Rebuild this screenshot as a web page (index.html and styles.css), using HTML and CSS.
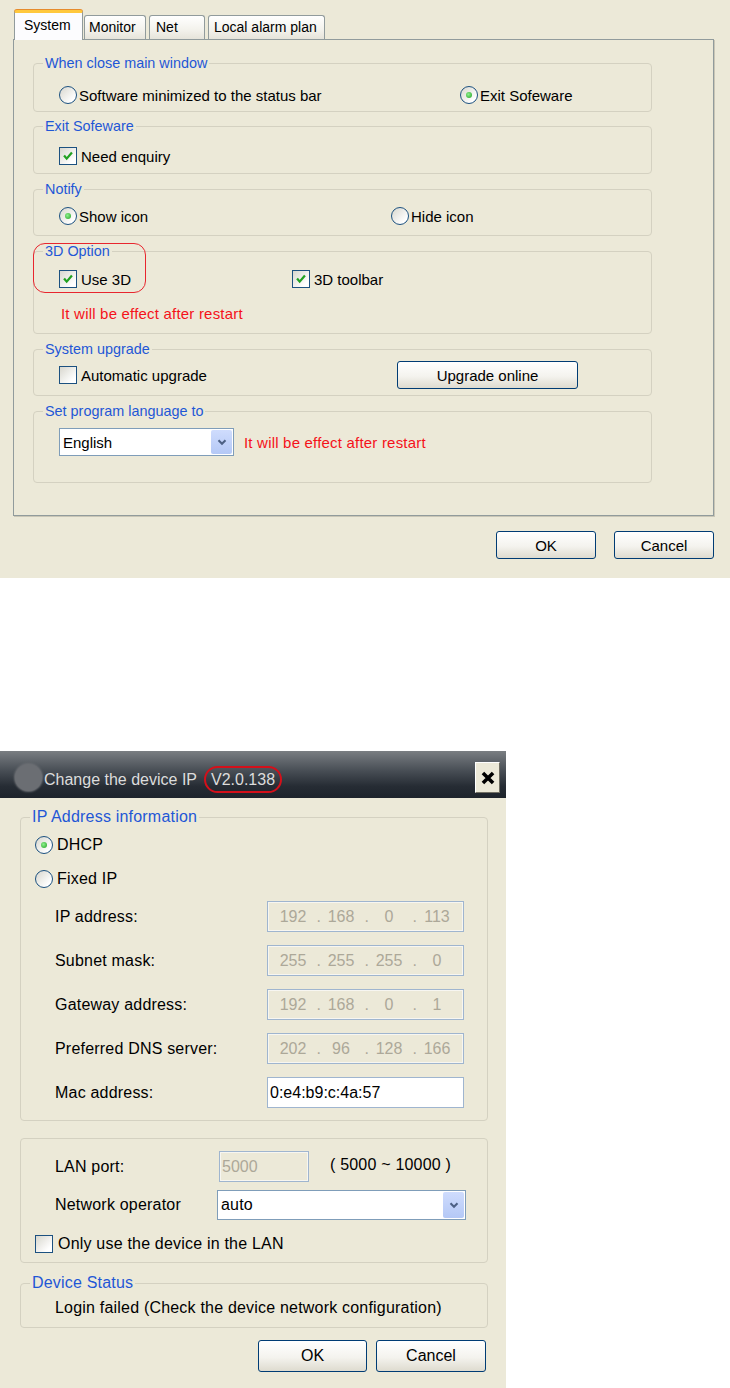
FILE: index.html
```html
<!DOCTYPE html>
<html>

<head>
    <meta charset="UTF-8">
    <title>Settings</title>
    <!-- Styles  -->
    <link rel="stylesheet" href="styles.css">
</head>

<body>
    <!-- System settings dialog -->
    <div class="settings">
        <div class="tabs">
            <div class="tab tab-active">System</div>
            <div class="tab tab-monitor">Monitor</div>
            <div class="tab tab-net">Net</div>
            <div class="tab tab-alarm">Local alarm plan</div>
        </div>

        <div class="panel">
            <fieldset class="group g-close">
                <legend>When close main window</legend>
                <div class="row">
                    <span class="opt col-close"><span class="radio"></span>Software minimized to the status bar</span>
                    <span class="opt"><span class="radio on"></span>Exit Sofeware</span>
                </div>
            </fieldset>

            <fieldset class="group g-exit">
                <legend>Exit Sofeware</legend>
                <div class="row">
                    <span class="opt"><span class="check on"><svg viewBox="0 0 16 16"><path d="M3.5 7.5 L6.5 11 L12.5 4" /></svg></span>Need enquiry</span>
                </div>
            </fieldset>

            <fieldset class="group g-notify">
                <legend>Notify</legend>
                <div class="row">
                    <span class="opt col-notify"><span class="radio on"></span>Show icon</span>
                    <span class="opt"><span class="radio"></span>Hide icon</span>
                </div>
            </fieldset>

            <fieldset class="group g-3d">
                <legend>3D Option</legend>
                <div class="row row-mark">
                    <span class="mark-ring"></span>
                    <span class="opt col-3d"><span class="check on"><svg viewBox="0 0 16 16"><path d="M3.5 7.5 L6.5 11 L12.5 4" /></svg></span>Use 3D</span>
                    <span class="opt"><span class="check on"><svg viewBox="0 0 16 16"><path d="M3.5 7.5 L6.5 11 L12.5 4" /></svg></span>3D toolbar</span>
                </div>
                <div class="row note-row"><span class="note">It will be effect after restart</span></div>
            </fieldset>

            <fieldset class="group g-upgrade">
                <legend>System upgrade</legend>
                <div class="row row-tall">
                    <span class="opt col-upgrade"><span class="check"></span>Automatic upgrade</span>
                    <button class="btn btn-upgrade">Upgrade online</button>
                </div>
            </fieldset>

            <fieldset class="group g-lang">
                <legend>Set program language to</legend>
                <div class="row row-tall">
                    <div class="select select-lang">
                        <span>English</span>
                        <span class="select-arrow"><svg viewBox="0 0 16 16"><path d="M4 6 L8 10 L12 6" /></svg></span>
                    </div>
                    <span class="note note-lang">It will be effect after restart</span>
                </div>
            </fieldset>
        </div>

        <div class="actions">
            <button class="btn btn-dlg">OK</button>
            <button class="btn btn-dlg">Cancel</button>
        </div>
    </div>

    <!-- Change device IP dialog -->
    <div class="ipdlg">
        <div class="titlebar">
            <span class="app-icon"></span>
            <span class="title">Change the device IP</span>
            <span class="version">V2.0.138</span>
            <span class="close"><svg viewBox="0 0 16 16"><path d="M3.5 3.5 L12.5 12.5 M12.5 3.5 L3.5 12.5" /></svg></span>
        </div>

        <div class="ipbody">
            <fieldset class="group ip-group">
                <legend>IP Address information</legend>
                <div class="row radio-row">
                    <span class="opt"><span class="radio on"></span>DHCP</span>
                </div>
                <div class="row radio-row radio-row-2">
                    <span class="opt"><span class="radio"></span>Fixed IP</span>
                </div>

                <div class="field-row field-row-first">
                    <span class="field-label">IP address:</span>
                    <div class="ipfield">
                        <span class="seg">192</span><span class="dot">.</span><span class="seg">168</span><span class="dot">.</span><span class="seg">0</span><span class="dot">.</span><span class="seg">113</span>
                    </div>
                </div>
                <div class="field-row">
                    <span class="field-label">Subnet mask:</span>
                    <div class="ipfield">
                        <span class="seg">255</span><span class="dot">.</span><span class="seg">255</span><span class="dot">.</span><span class="seg">255</span><span class="dot">.</span><span class="seg">0</span>
                    </div>
                </div>
                <div class="field-row">
                    <span class="field-label">Gateway address:</span>
                    <div class="ipfield">
                        <span class="seg">192</span><span class="dot">.</span><span class="seg">168</span><span class="dot">.</span><span class="seg">0</span><span class="dot">.</span><span class="seg">1</span>
                    </div>
                </div>
                <div class="field-row">
                    <span class="field-label">Preferred DNS server:</span>
                    <div class="ipfield">
                        <span class="seg">202</span><span class="dot">.</span><span class="seg">96</span><span class="dot">.</span><span class="seg">128</span><span class="dot">.</span><span class="seg">166</span>
                    </div>
                </div>
                <div class="field-row">
                    <span class="field-label">Mac address:</span>
                    <div class="ipfield ipfield-mac">0:e4:b9:c:4a:57</div>
                </div>
            </fieldset>

            <fieldset class="group net-group">
                <div class="field-row field-row-lan">
                    <span class="field-label label-lan">LAN port:</span>
                    <div class="ipfield port-field">5000</div>
                    <span class="range">( 5000 ~ 10000 )</span>
                </div>
                <div class="field-row field-row-op">
                    <span class="field-label label-op">Network operator</span>
                    <div class="select select-op">
                        <span>auto</span>
                        <span class="select-arrow"><svg viewBox="0 0 16 16"><path d="M4 6 L8 10 L12 6" /></svg></span>
                    </div>
                </div>
                <div class="row lan-row">
                    <span class="opt"><span class="check"></span>Only use the device in the LAN</span>
                </div>
            </fieldset>

            <fieldset class="group status-group">
                <legend>Device Status</legend>
                <div class="row status-row">Login failed (Check the device network configuration)</div>
            </fieldset>

            <div class="actions ip-actions">
                <button class="btn btn-ok">OK</button>
                <button class="btn btn-cancel">Cancel</button>
            </div>
        </div>
    </div>
</body>

</html>
```

FILE: styles.css
```css
body {
    margin: 0;
    background-color: #ffffff;
    font-family: "Liberation Sans", Arial, sans-serif;
    color: #000000;
}

/* ---------- system settings dialog ---------- */

.settings {
    height: 578px;
    box-sizing: border-box;
    padding-top: 10px;
    background-color: #ece9d8;
    font-size: 15px;
}

.tabs {
    display: flex;
    align-items: flex-end;
    height: 29px;
    padding-left: 14px;
    font-size: 14px;
}

.tab {
    height: 24px;
    box-sizing: border-box;
    border: 1px solid #919b9c;
    border-bottom: none;
    border-radius: 3px 3px 0 0;
    background: linear-gradient(#ffffff, #f3f2ec 60%, #e6e4da);
    line-height: 22px;
    margin-left: 3px;
}

.tab-active {
    position: relative;
    z-index: 1;
    width: 69px;
    height: 30px;
    margin: 0 0 -1px 0;
    padding: 2px 0 0 9px;
    border-top: 3px solid #ffc83c;
    box-shadow: 0 -1px 0 #e68b2c;
    background: #fcfcfe;
    line-height: 20px;
}

.tab-monitor {
    width: 62px;
    margin-left: 1px;
    padding-left: 4px;
}

.tab-net {
    width: 56px;
    padding-left: 6px;
}

.tab-alarm {
    width: 117px;
    padding-left: 5px;
}

.panel {
    width: 701px;
    height: 477px;
    box-sizing: border-box;
    margin-left: 13px;
    padding: 15px 0 0 19px;
    border: 1px solid #919b9c;
    box-shadow: 1px 1px 0 #c9c6b6;
}

.group {
    width: 619px;
    box-sizing: border-box;
    min-width: 0;
    margin: 7px 0 0 0;
    padding: 0 0 0 25px;
    border: 1px solid #d4d1c1;
    border-radius: 4px;
}

.group legend {
    color: #1f57d6;
    font-size: 14.4px;
    line-height: 16px;
    padding: 0 2px;
    margin-left: -16px;
}

.g-close {
    margin-top: 0;
    height: 57px;
    padding-top: 14px;
}

.g-exit {
    margin-top: 6px;
    height: 56px;
    padding-top: 12px;
}

.g-notify {
    height: 55px;
    padding-top: 9px;
}

.g-3d {
    height: 91px;
    padding-top: 10px;
}

.g-upgrade {
    height: 55px;
    padding-top: 4px;
}

.g-lang {
    height: 80px;
    padding-top: 9px;
}

.row {
    display: flex;
    align-items: center;
    height: 20px;
}

.row-tall {
    height: 28px;
}

.opt {
    display: flex;
    align-items: center;
    gap: 2px;
}

.col-close {
    width: 401px;
}

.col-notify {
    width: 332px;
}

.col-3d {
    width: 233px;
}

.col-upgrade {
    width: 338px;
}

/* radio and checkbox in the XP look */
.radio {
    display: grid;
    place-items: center;
    width: 18px;
    height: 18px;
    box-sizing: border-box;
    border: 1px solid #1c5180;
    border-radius: 50%;
    background: linear-gradient(135deg, #d8d7ce, #ffffff 80%);
}

.radio.on::after {
    content: "";
    width: 6px;
    height: 6px;
    border-radius: 50%;
    background: radial-gradient(circle at 40% 40%, #8ff08f, #21a121);
}

.check {
    display: grid;
    place-items: center;
    width: 18px;
    height: 18px;
    box-sizing: border-box;
    border: 1px solid #1c5180;
    background: linear-gradient(135deg, #d8d7ce, #ffffff 80%);
    margin-right: 2px;
}

.check svg {
    width: 14px;
    height: 14px;
}

.check path {
    fill: none;
    stroke: #21a121;
    stroke-width: 2.6;
}

.row-mark {
    position: relative;
}

.mark-ring {
    position: absolute;
    left: -26px;
    top: -26px;
    width: 113px;
    height: 50px;
    box-sizing: border-box;
    border: 1.5px solid #e8262e;
    border-radius: 12px;
}

.note {
    color: #f5121a;
    letter-spacing: 0.2px;
}

.note-row {
    margin-top: 14px;
    padding-left: 2px;
}

.note-lang {
    margin-left: 10px;
}

.btn {
    height: 28px;
    box-sizing: border-box;
    border: 1px solid #003c74;
    border-radius: 3px;
    background: linear-gradient(#ffffff, #f4f3ee 55%, #dedbcf);
    font-family: inherit;
    font-size: 15px;
    color: #000000;
    padding: 0;
}

.btn-upgrade {
    width: 181px;
}

.select {
    display: flex;
    align-items: center;
    height: 28px;
    box-sizing: border-box;
    padding: 1px 1px 1px 3px;
    border: 1px solid #7f9db9;
    background-color: #ffffff;
}

.select-lang {
    width: 175px;
}

.select-arrow {
    display: grid;
    place-items: center;
    width: 21px;
    height: 100%;
    margin-left: auto;
    border-radius: 2px;
    background: linear-gradient(#cfdcfd, #b4c8f6);
}

.select-arrow svg {
    width: 14px;
    height: 14px;
}

.select-arrow path {
    fill: none;
    stroke: #4d6185;
    stroke-width: 2.4;
}

.actions {
    display: flex;
    justify-content: flex-end;
    gap: 18px;
    margin-top: 15px;
    padding-right: 16px;
}

.btn-dlg {
    width: 100px;
}

/* ---------- change device IP dialog ---------- */

.ipdlg {
    width: 506px;
    height: 637px;
    margin-top: 173px;
    background-color: #ece9d8;
    font-size: 16px;
    letter-spacing: 0.2px;
}

.titlebar {
    display: flex;
    align-items: center;
    height: 47px;
    box-sizing: border-box;
    padding: 6px 0 0 15px;
    background: linear-gradient(#7a7e82, #4a5057 40%, #262c34 75%, #1d232b);
    color: #dcdcdc;
    letter-spacing: 0;
}

.app-icon {
    width: 27px;
    height: 27px;
    border-radius: 50%;
    background-color: #6b6e73;
    box-shadow: 0 0 2px 1px #6b6e73;
}

.title {
    margin-left: 2px;
    padding-top: 5px;
}

.version {
    margin: 4px 0 0 7px;
    padding: 3px 5px;
    border: 2px solid #d4101a;
    border-radius: 14px;
    line-height: 17px;
}

.close {
    display: grid;
    place-items: center;
    width: 25px;
    height: 31px;
    box-sizing: border-box;
    margin-left: auto;
    margin-right: 6px;
    border: 1px solid;
    border-color: #ffffff #716f64 #716f64 #ffffff;
    background-color: #ece9d8;
}

.close svg {
    width: 18px;
    height: 18px;
}

.close path {
    fill: none;
    stroke: #000000;
    stroke-width: 3.2;
}

.ipbody {
    padding: 10px 0 0 20px;
}

.ipdlg .group {
    width: 468px;
    padding-left: 14px;
}

.ipdlg .group legend {
    font-size: 16px;
    line-height: 18px;
    margin-left: -5px;
}

.ip-group {
    margin-top: 0;
    height: 313px;
    padding-top: 9px;
}

.radio-row-2 {
    margin-top: 14px;
}

.radio-row .opt {
    gap: 4px;
}

.field-row {
    display: flex;
    align-items: center;
    height: 31px;
    margin-top: 13px;
    padding-left: 20px;
}

.field-row-first {
    margin-top: 12px;
}

.field-label {
    width: 212px;
}

.ipfield {
    display: flex;
    align-items: center;
    width: 197px;
    height: 31px;
    box-sizing: border-box;
    padding-left: 5px;
    border: 1px solid #9fb5cf;
    box-shadow: inset 0 0 0 1px #f7f6f1;
    color: #aca899;
    letter-spacing: 0;
}

.seg {
    width: 40px;
    text-align: center;
}

.dot {
    width: 8px;
    text-align: right;
}

.ipfield-mac {
    padding-left: 2px;
    background-color: #ffffff;
    color: #000000;
    box-shadow: none;
}

.net-group {
    height: 125px;
    margin-top: 17px;
    padding-top: 12px;
}

.field-row-lan {
    margin-top: 0;
}

.label-lan {
    width: 164px;
}

.port-field {
    width: 90px;
    padding-left: 2px;
}

.range {
    margin-left: 21px;
    margin-bottom: 4px;
}

.field-row-op {
    height: 30px;
    margin-top: 8px;
}

.label-op {
    width: 162px;
}

.select-op {
    width: 249px;
    height: 30px;
}

.lan-row {
    height: 18px;
    margin-top: 15px;
}

.lan-row .opt {
    gap: 3px;
}

.status-group {
    height: 54px;
    margin-top: 11px;
    padding-top: 6px;
}

.status-row {
    padding-left: 20px;
}

.ip-actions {
    gap: 9px;
    margin-top: 12px;
    padding-right: 20px;
}

.btn-ok,
.btn-cancel {
    height: 32px;
    font-size: 16px;
}

.btn-ok {
    width: 109px;
}

.btn-cancel {
    width: 110px;
}
```
